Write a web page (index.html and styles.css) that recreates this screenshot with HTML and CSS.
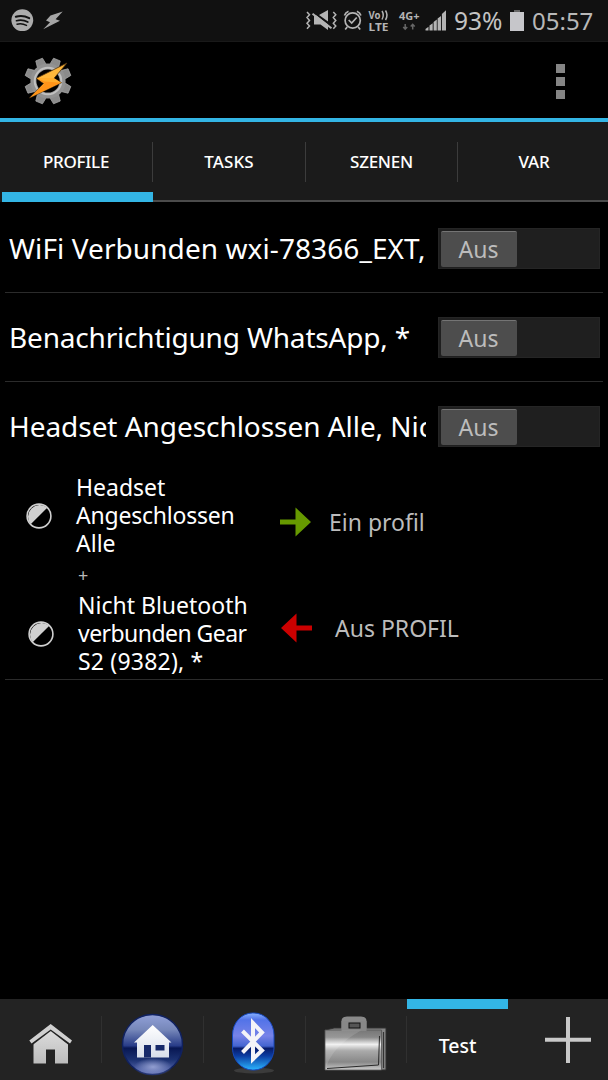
FILE: index.html
```
<!DOCTYPE html>
<html lang="de">
<head>
<meta charset="utf-8">
<title>Tasker</title>
<link rel="stylesheet" href="styles.css">
</head>
<body>
<div class="screen">
  <div class="status">
    <svg class="status-left" width="80" height="41" viewBox="0 0 80 41">
      <circle cx="22.3" cy="20.2" r="10.9" fill="#acacac"/>
      <g fill="none" stroke="#111" stroke-linecap="round">
        <path d="M15.8 16.8q7-2 13.400 1.400" stroke-width="2"/>
        <path d="M16.500 20.700q6-1.500 11.300 1.300" stroke-width="1.700"/>
        <path d="M17 24.200q5-1.200 9.500 1.200" stroke-width="1.400"/>
      </g>
      <path d="M62.700 11.500L55.600 19.200L60 20.800L43.200 29.200L50 22.200L46 20.600L50.500 15.500Z" fill="#a5a5a5"/>
    </svg>
    <svg class="status-icons" width="147" height="41" viewBox="300 0 147 41">
      <g fill="none" stroke="#b4b4b4" stroke-width="1.500">
        <path d="M307 12l2.500 2.800l-2.500 2.800l2.500 2.800l-2.500 2.800l2.500 2.800l-2.500 2.800M333.300 12l2.500 2.800l-2.500 2.800l2.500 2.800l-2.500 2.800l2.500 2.800l-2.500 2.800"/>
      </g>
      <path d="M314 15.500H316.500L328 24.500V30L320.500 24.500H314ZM319 15L328 10V21.500Z" fill="#b4b4b4"/>
      <path d="M312.500 13.800L331.500 28.300" stroke="#b4b4b4" stroke-width="2"/>
      <g fill="none" stroke="#b4b4b4" stroke-width="1.700">
        <circle cx="352.700" cy="20.500" r="7.600"/>
        <path d="M348.700 20l3 3l5-5.500M344.500 15.500q.8-3 4-4.300M360.900 15.500q-.8-3-4-4.300M347.200 27l-2 2.500M358.200 27l2 2.500"/>
      </g>
      <g class="tiny">
        <text x="368.500" y="19" textLength="12" lengthAdjust="spacingAndGlyphs">Vo</text>
        <text x="368.500" y="30.500" textLength="20" lengthAdjust="spacingAndGlyphs">LTE</text>
        <text x="399" y="19.500" textLength="20.500" lengthAdjust="spacingAndGlyphs">4G+</text>
      </g>
      <path d="M382 11q2.500 4 0 8.500M385.500 10.500q3 4.500 0 9.500" fill="none" stroke="#b4b4b4" stroke-width="1.500"/>
      <path d="M405.200 24v5M403.200 27l2 2.200l2-2.200M412.700 29.500v-5M410.700 26.500l2-2.200l2 2.200" fill="none" stroke="#666" stroke-width="1.500"/>
      <path d="M425.500 30.500v-1.500l3-2.300v3.800ZM429.500 30.500v-5l3.200-2.300v7.300ZM433.600 30.500v-8.500l3.200-2.500v11ZM437.600 30.500v-12l3.400-2.500v14.500ZM441.900 30.500v-16.500l4.100-3.800v20.300Z" fill="#b4b4b4"/>
    </svg>
    <span class="percent">93%</span>
    <svg class="battery" width="14" height="22" viewBox="0 0 14 22"><path d="M4 0h6v2H4Z" fill="#666"/><path d="M0 2h14v19H0Z" fill="#c6c6ca"/></svg>
    <span class="clock">05:57</span>
  </div>
  <div class="appbar">
    <svg width="48" height="48" viewBox="24 57 48 48">
      <defs><path id="tooth" d="M43.300 65L44.400 57.800H51.600L52.700 65Z"/></defs>
      <g fill="#8b8b8b" stroke="#a9a9a9" stroke-width=".7">
        <use href="#tooth" transform="rotate(22.500 48 81)"/><use href="#tooth" transform="rotate(67.500 48 81)"/>
        <use href="#tooth" transform="rotate(112.500 48 81)"/><use href="#tooth" transform="rotate(157.500 48 81)"/>
        <use href="#tooth" transform="rotate(202.500 48 81)"/><use href="#tooth" transform="rotate(247.500 48 81)"/>
        <use href="#tooth" transform="rotate(292.500 48 81)"/><use href="#tooth" transform="rotate(337.500 48 81)"/>
      </g>
      <circle cx="48" cy="81" r="14.600" fill="none" stroke="#929292" stroke-width="6"/>
      <circle cx="48" cy="81" r="13.300" fill="none" stroke="#c0c0c0" stroke-width="2"/>
      <path d="M67 63L54 78.300L61.500 82.700L29.500 98L43.500 83.500L36.300 78.300Z" fill="#ffb73b" stroke="#503410" stroke-width=".8"/>
      <path d="M37 78.400L54 78.800L61 82.700L30 97.500L44.500 83.400Z" fill="#ff9419"/>
      <path d="M37 78.300L54 78.300L61 82.700L44.500 81.500Z" fill="#ffad2d"/>
    </svg>
    <div class="overflow"><i></i><i></i><i></i></div>
  </div>
  <nav class="tabs">
    <div class="tab active"><span>PROFILE</span></div>
    <div class="tab tasks-tab"><span>TASKS</span></div>
    <div class="tab"><span>SZENEN</span></div>
    <div class="tab"><span>VAR</span></div>
  </nav>
  <main class="list">
    <section class="profile">
      <div class="row"><div class="name"><span class="n1">WiFi Verbunden wxi-78366_EXT,</span></div><div class="switch"><div class="thumb">Aus</div></div></div>
    </section>
    <section class="profile">
      <div class="row"><div class="name"><span class="n2">Benachrichtigung WhatsApp, *</span></div><div class="switch"><div class="thumb">Aus</div></div></div>
    </section>
    <section class="profile expanded">
      <div class="row"><div class="name"><span class="n3">Headset Angeschlossen Alle, Nicht</span></div><div class="switch"><div class="thumb">Aus</div></div></div>
      <div class="details">
        <div class="contexts">
          <div class="context">
            <svg width="26" height="26" viewBox="0 0 26 26"><circle cx="13" cy="13" r="11.900" fill="none" stroke="#d0d0d0" stroke-width="1.600"/><path d="M4.700 21.300A11.800 11.800 0 0 1 21.300 4.700Z" fill="#d0d0d0"/></svg>
            <p>Headset<br><span class="tight">Angeschlossen</span><br>Alle</p>
          </div>
          <div class="plus">+</div>
          <div class="context second">
            <svg width="26" height="26" viewBox="0 0 26 26"><circle cx="13" cy="13" r="11.900" fill="none" stroke="#d0d0d0" stroke-width="1.600"/><path d="M4.700 21.300A11.800 11.800 0 0 1 21.300 4.700Z" fill="#d0d0d0"/></svg>
            <p>Nicht Bluetooth<br><span class="tighter">verbunden Gear</span><br><span class="loose">S2 (9382), *</span></p>
          </div>
        </div>
        <div class="tasks">
          <div class="task enter"><svg width="31" height="30" viewBox="0 0 31 30"><path d="M0 12.500H15.500V.5L31 15L15.500 29.500V17.500H0Z" fill="#669900"/></svg><span>Ein profil</span></div>
          <div class="task exit"><svg width="31" height="30" viewBox="0 0 31 30"><path d="M31 12.500H15.500V.5L0 15L15.500 29.500V17.500H31Z" fill="#cc0000"/></svg><span>Aus PROFIL</span></div>
        </div>
      </div>
    </section>
  </main>
  <footer class="projects">
    <div class="project">
      <svg width="101" height="81" viewBox="0 999 101 81">
        <defs><linearGradient id="grey" x2="0" y2="1"><stop stop-color="#ddd"/><stop offset="1" stop-color="#bcbcbc"/></linearGradient></defs>
        <path d="M33.500 1043.300L51 1030L68 1044V1063.500H55V1049.500H46V1063.500H33.500Z" fill="url(#grey)"/>
        <path d="M29.300 1043.500L50.700 1027L72 1043.500" fill="none" stroke="#232323" stroke-width="6.500"/>
        <path d="M29.300 1040.500L50.700 1024L72 1040.500L70 1043.500L50.700 1029.500L31.500 1043.500Z" fill="#d0d0d0"/>
      </svg>
    </div>
    <div class="project">
      <svg width="101" height="81" viewBox="102 999 101 81">
        <defs><linearGradient id="navy" x2="0" y2="1"><stop stop-color="#91a0d8"/><stop offset=".25" stop-color="#7788ba"/><stop offset=".52" stop-color="#283c88"/><stop offset=".56" stop-color="#081753"/><stop offset=".75" stop-color="#1b3171"/><stop offset="1" stop-color="#6475bc"/></linearGradient>
        <radialGradient id="glow"><stop stop-color="#929ed0"/><stop offset="1" stop-color="#929ed0" stop-opacity="0"/></radialGradient>
        <linearGradient id="white" x2="0" y2="1"><stop stop-color="#fff"/><stop offset="1" stop-color="#d7deea"/></linearGradient></defs>
        <circle cx="152.500" cy="1044.500" r="30" fill="url(#navy)" stroke="#10215f" stroke-width="1.500"/>
        <ellipse cx="153" cy="1067" rx="19" ry="9" fill="url(#glow)"/>
        <path d="M152.700 1025L134 1042.500H137V1057.500H169V1042.500H171.500Z" fill="url(#white)"/>
        <path d="M144 1045h7v12.500h-7ZM155.500 1045h9v5.500h-9Z" fill="#162969"/>
      </svg>
    </div>
    <div class="project">
      <svg width="101" height="81" viewBox="204 999 101 81">
        <defs><linearGradient id="blue" x2="0" y2="1"><stop stop-color="#87b1ff"/><stop offset=".12" stop-color="#5273e8"/><stop offset=".4" stop-color="#7783e8"/><stop offset=".58" stop-color="#4364d0"/><stop offset=".62" stop-color="#071b69"/><stop offset=".75" stop-color="#0b3ca1"/><stop offset="1" stop-color="#2bb5ff"/></linearGradient></defs>
        <ellipse cx="254" cy="1070.500" rx="20" ry="3" fill="#3b3b3b"/>
        <rect x="232.500" y="1013" width="41.500" height="57" rx="20" ry="22" fill="url(#blue)" stroke="#1648bc"/>
        <path d="M242.500 1031L262 1050.500L253 1059V1023L262 1032.500L242.500 1052.500" fill="none" stroke="#f4f4f8" stroke-width="4"/>
      </svg>
    </div>
    <div class="project">
      <svg width="101" height="81" viewBox="306 999 101 81">
        <defs><linearGradient id="steel" x2="0" y2="1"><stop stop-color="#777"/><stop offset=".18" stop-color="#888"/><stop offset=".36" stop-color="#f0f0f0"/><stop offset=".52" stop-color="#aaa"/><stop offset=".8" stop-color="#888"/><stop offset="1" stop-color="#ccc"/></linearGradient></defs>
        <path d="M328 1029.500L334 1028H386V1070H328Z" fill="#858585" stroke="#303030"/>
        <path d="M344 1031V1021Q344 1019 347 1019H361Q364 1019 364 1021V1031" fill="none" stroke="#8a8a8a" stroke-width="5"/>
        <path d="M325 1030H381.500V1070H325Z" fill="url(#steel)" stroke="#555" stroke-width=".8"/>
        <path d="M341.500 1021H366.500V1031H341.500Z" fill="#878787"/>
        <rect x="349" y="1023" width="11" height="5" fill="#555" stroke="#111"/>
        <path d="M325.500 1069.500Q331 1047 361 1030.500H325.500Z" fill="#fff" opacity=".13"/>
        <path d="M379.500 1036L378.500 1065L327 1068.500" fill="none" stroke="#2a2a2a" stroke-width="1"/>
        <path d="M383.500 1032V1068" stroke="#333" stroke-width="1.200"/>
      </svg>
    </div>
    <div class="project current"><span>Test</span></div>
    <div class="project add"><svg width="46" height="46" viewBox="0 0 46 46"><path d="M0 22.800H46M23 0V46" stroke="#c9c9c9" stroke-width="4"/></svg></div>
  </footer>
</div>
</body>
</html>
```
FILE: styles.css
```
* { box-sizing: border-box; }
body { margin: 0; background: #000; }
.screen { width: 608px; height: 1080px; display: flex; flex-direction: column; overflow: hidden; background: #000; color: #fff; font-family: "Noto Sans", sans-serif; white-space: nowrap; }
.screen svg { display: block; flex: none; }
.status { height: 42px; flex: none; display: flex; align-items: center; background: #111; border-bottom: 1px solid #191919; color: #c3c3c3; font-size: 24px; line-height: 41px; }
.status-icons { margin-left: 220px; }
.tiny { font-size: 11px; font-weight: 700; fill: #b4b4b4; }
.percent { margin-left: 7px; width: 56px; font-size: 24.5px; }
.battery { margin-top: 0; }
.clock { margin-left: 8px; letter-spacing: 0; color: #b8b8b8; }
.appbar { height: 80px; flex: none; display: flex; justify-content: space-between; padding: 15px 43px 0 24px; border-bottom: 4px solid #33b5e5; }
.overflow { display: grid; gap: 4px; align-content: start; padding-top: 7px; }
.overflow i { width: 9px; height: 9px; background: #858585; }
.tabs { height: 80px; flex: none; display: grid; grid-template-columns: 153px 153px 152px 150px; background: #1b1b1b; }
.tab { border-bottom: 2px solid #4b4b4b; font-size: 17px; font-weight: 500; letter-spacing: -.25px; text-align: center; padding-top: 20px; }
.tab span { display: block; height: 40px; line-height: 40px; border-right: 1px solid #3c3c3c; }
.tab:last-child span { border: 0; padding-left: 2px; }
.tab.active { border-bottom: 10px solid #33b5e5; margin-left: 2px; padding-right: 0; }
.tab.active span { padding-right: 2px; }
.tasks-tab { letter-spacing: .1px; }
.list { flex: 1; }
.profile { height: 89px; margin: 0 5px; border-bottom: 1px solid #2b2b2b; }
.profile:first-child { height: 91px; padding-top: 2px; }
.row { height: 88px; display: flex; align-items: center; }
.name { width: 421px; margin-right: 12px; padding-left: 4px; overflow: hidden; font-size: 28px; line-height: 50px; }
.n1 { letter-spacing: .08px; }
.n2 { letter-spacing: -.18px; }
.n3 { letter-spacing: -.05px; }
.switch { width: 162px; height: 41px; background: #1f1f1f; padding: 2px 2px; border: 1px solid #252525; }
.thumb { width: 76px; height: 36px; background: #4d4d4d; border-top: 1px solid #747474; border-radius: 2px; text-align: center; color: #bcbcbc; font-size: 23px; line-height: 35px; padding-right: 1px; }
.profile.expanded { height: 298px; }
.details { display: flex; height: 209px; }
.contexts { width: 275px; padding-top: 3px; }
.context { height: 84px; display: flex; align-items: center; padding-left: 21px; gap: 24px; }
.context svg { margin-top: 1px; }
.context p { margin: 0; font-size: 23px; line-height: 28px; }
.context.second { padding-left: 23px; }
.tight { letter-spacing: -.22px; }
.tighter { letter-spacing: -.55px; }
.loose { letter-spacing: .2px; }
.plus { height: 34px; line-height: 37px; padding-left: 73px; font-size: 18px; color: #b8b8b8; }
.tasks { font-size: 23px; color: #bcbcbc; padding-top: 35px; }
.task { display: flex; align-items: center; height: 34px; gap: 18px; }
.task.exit { margin-top: 72px; padding-left: 1px; gap: 23px; }
.projects { height: 81px; flex: none; display: grid; grid-template-columns: 102px 102px 102px 101px 101px 100px; background: #232323; }
.project { background: linear-gradient(#303030, #303030) right 17px / 1px 47px no-repeat; }
.project.current { border-top: 10px solid #33b5e5; background: none; font-size: 19.5px; font-weight: 500; text-align: center; line-height: 73px; }
.project.add { background: none; padding: 18px 0 0 37px; }
```
